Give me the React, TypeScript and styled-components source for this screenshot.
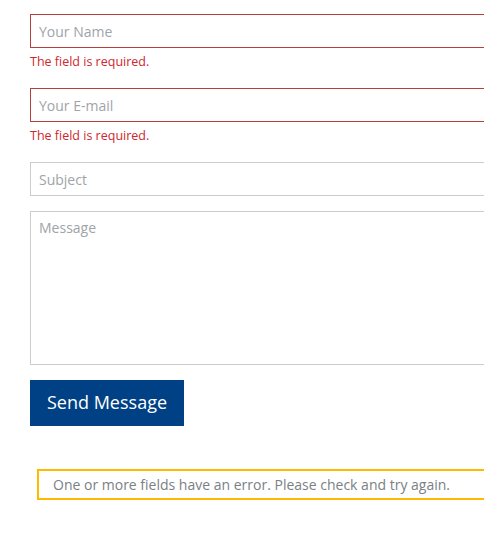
import React from "react";
import styled, { createGlobalStyle } from "styled-components";

const Global = createGlobalStyle`
  html, body { margin: 0; padding: 0; background: #fff; overflow: hidden; }
  body { font-family: "Open Sans", "Noto Sans", sans-serif; }
  * { box-sizing: border-box; }
`;

const Form = styled.form`
  width: 520px;
  padding: 14px 0 0 30px;
  display: flex;
  flex-direction: column;
`;

const Fields = styled.div`
  display: flex;
  flex-direction: column;
  gap: 15px;
`;

const Field = styled.div`
  display: flex;
  flex-direction: column;
`;

const Input = styled.input<{ $invalid?: boolean }>`
  display: block;
  width: 100%;
  height: 34px;
  padding: 6px 8px;
  border: 1px solid ${(p) => (p.$invalid ? "#b7403d" : "#cccccc")};
  font-family: "Open Sans", sans-serif;
  font-size: 14px;
  color: #333;
  background: #fff;
  outline: none;
  &::placeholder { color: #a0a4a8; }
`;

const TextArea = styled.textarea`
  display: block;
  width: 100%;
  height: 154px;
  padding: 6px 8px;
  border: 1px solid #cccccc;
  font-family: "Open Sans", sans-serif;
  font-size: 14px;
  line-height: 20px;
  resize: none;
  outline: none;
  &::placeholder { color: #a0a4a8; }
`;

const Tip = styled.span`
  display: block;
  margin-top: 2px;
  font-size: 12.5px;
  line-height: 23px;
  color: #d0262e;
`;

const Button = styled.button`
  align-self: flex-start;
  margin-top: 15px;
  height: 46px;
  width: 154px;
  padding: 0 0 2px;
  border: none;
  background: #004185;
  color: #fff;
  font-family: "Open Sans", sans-serif;
  font-size: 18px;
  cursor: pointer;
`;

const Response = styled.div`
  margin: 43px 0 0 7px;
  padding: 3px 14px;
  border: 2px solid #ffb900;
  font-size: 14px;
  line-height: 21px;
  color: #7a7f85;
`;

export default function App() {
  return (
    <>
      <Global />
      <Form onSubmit={(e) => e.preventDefault()}>
        <Fields>
          <Field>
            <Input $invalid placeholder="Your Name" />
            <Tip>The field is required.</Tip>
          </Field>
          <Field>
            <Input $invalid placeholder="Your E-mail" />
            <Tip>The field is required.</Tip>
          </Field>
          <Field>
            <Input placeholder="Subject" />
          </Field>
          <Field>
            <TextArea placeholder="Message" />
          </Field>
        </Fields>
        <Button type="submit">Send Message</Button>
        <Response>One or more fields have an error. Please check and try again.</Response>
      </Form>
    </>
  );
}
